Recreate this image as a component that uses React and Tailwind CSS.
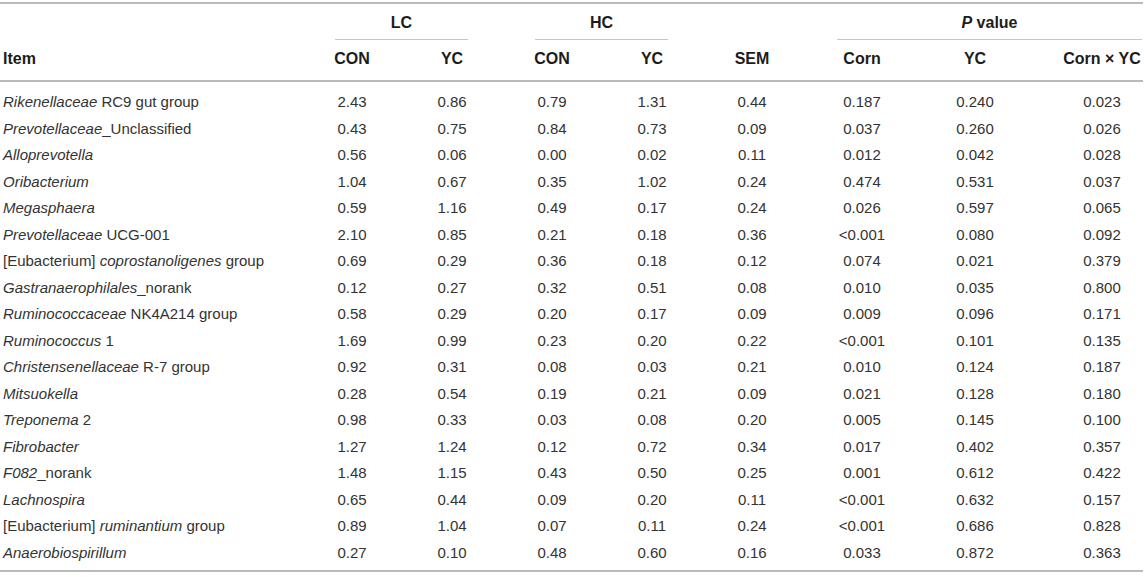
import React from 'react';

const rows = [
  [<><i>Rikenellaceae</i> RC9 gut group</>, '2.43', '0.86', '0.79', '1.31', '0.44', '0.187', '0.240', '0.023'],
  [<><i>Prevotellaceae</i>_Unclassified</>, '0.43', '0.75', '0.84', '0.73', '0.09', '0.037', '0.260', '0.026'],
  [<i>Alloprevotella</i>, '0.56', '0.06', '0.00', '0.02', '0.11', '0.012', '0.042', '0.028'],
  [<i>Oribacterium</i>, '1.04', '0.67', '0.35', '1.02', '0.24', '0.474', '0.531', '0.037'],
  [<i>Megasphaera</i>, '0.59', '1.16', '0.49', '0.17', '0.24', '0.026', '0.597', '0.065'],
  [<><i>Prevotellaceae</i> UCG-001</>, '2.10', '0.85', '0.21', '0.18', '0.36', '<0.001', '0.080', '0.092'],
  [<>[Eubacterium] <i>coprostanoligenes</i> group</>, '0.69', '0.29', '0.36', '0.18', '0.12', '0.074', '0.021', '0.379'],
  [<><i>Gastranaerophilales</i>_norank</>, '0.12', '0.27', '0.32', '0.51', '0.08', '0.010', '0.035', '0.800'],
  [<><i>Ruminococcaceae</i> NK4A214 group</>, '0.58', '0.29', '0.20', '0.17', '0.09', '0.009', '0.096', '0.171'],
  [<><i>Ruminococcus</i> 1</>, '1.69', '0.99', '0.23', '0.20', '0.22', '<0.001', '0.101', '0.135'],
  [<><i>Christensenellaceae</i> R-7 group</>, '0.92', '0.31', '0.08', '0.03', '0.21', '0.010', '0.124', '0.187'],
  [<i>Mitsuokella</i>, '0.28', '0.54', '0.19', '0.21', '0.09', '0.021', '0.128', '0.180'],
  [<><i>Treponema</i> 2</>, '0.98', '0.33', '0.03', '0.08', '0.20', '0.005', '0.145', '0.100'],
  [<i>Fibrobacter</i>, '1.27', '1.24', '0.12', '0.72', '0.34', '0.017', '0.402', '0.357'],
  [<><i>F082</i>_norank</>, '1.48', '1.15', '0.43', '0.50', '0.25', '0.001', '0.612', '0.422'],
  [<i>Lachnospira</i>, '0.65', '0.44', '0.09', '0.20', '0.11', '<0.001', '0.632', '0.157'],
  [<>[Eubacterium] <i>ruminantium</i> group</>, '0.89', '1.04', '0.07', '0.11', '0.24', '<0.001', '0.686', '0.828'],
  [<i>Anaerobiospirillum</i>, '0.27', '0.10', '0.48', '0.60', '0.16', '0.033', '0.872', '0.363'],
];

const subHeads = ['CON', 'YC', 'CON', 'YC', 'SEM', 'Corn', 'YC', 'Corn × YC'];

// same column widths for every row
const cols = 'grid grid-cols-[302px_100px_100px_100px_100px_100px_120px_106px_116px]';

const Rule = () => <div className="h-[2px] w-[1143px] bg-[#b9b9b9]" />;

export default function App() {
  return (
    <div className="w-[1144px] h-[577px] bg-white text-[#333] font-['Liberation_Sans',Arial,sans-serif]">
      <div className="h-[2px]" />
      <Rule />

      {/* group labels */}
      <div className={`${cols} text-[16px] leading-[18px] font-bold text-[#1c1c1c]`}>
        <div />
        <div className="col-span-2 ml-[33px] mr-[34px] border-b border-[#c6c6c6] pt-[10px] pb-[7px] text-center">LC</div>
        <div className="col-span-2 ml-[33px] mr-[34px] border-b border-[#c6c6c6] pt-[10px] pb-[7px] text-center">HC</div>
        <div />
        <div className="col-span-3 ml-[35px] mr-[2px] border-b border-[#c6c6c6] pt-[10px] pb-[7px] text-center">
          <i>P</i> value
        </div>
      </div>

      {/* column heads */}
      <div className={`${cols} text-[16px] leading-[18px] font-bold text-[#1c1c1c] pt-[10px] pb-[12px]`}>
        <div className="pl-[3px]">Item</div>
        {subHeads.map((h, i) => (
          <div key={i} className={`text-center whitespace-nowrap ${i === 7 ? 'pl-[32px]' : ''}`}>{h}</div>
        ))}
      </div>
      <Rule />

      {/* body */}
      <div className="pt-[7px] pb-[4px] text-[15px]">
        {rows.map((r, ri) => (
          <div key={ri} className={`${cols} h-[26.5px] items-center leading-[26.5px]`}>
            <div className="pl-[3px] whitespace-nowrap">{r[0]}</div>
            {r.slice(1).map((v, i) => (
              <div key={i} className={`text-center ${i === 7 ? 'pl-[32px]' : ''}`}>{v}</div>
            ))}
          </div>
        ))}
      </div>
      <Rule />
    </div>
  );
}
